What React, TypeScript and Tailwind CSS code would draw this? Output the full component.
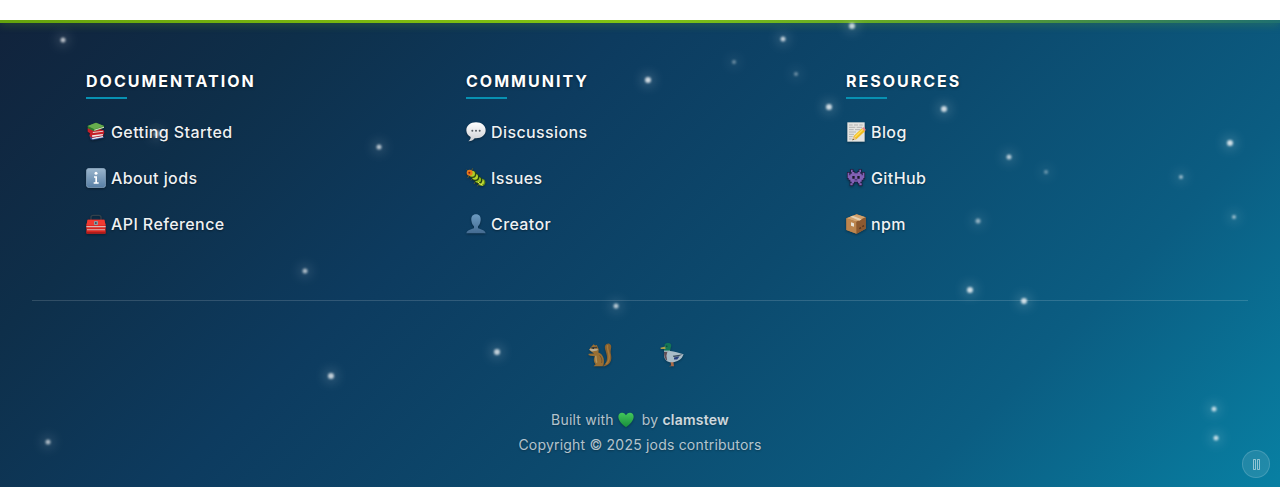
import type { ReactNode } from "react";

type Star = { x: number; y: number; size: number; opacity: number };

const STARS: Star[] = [
  { x: 63, y: 20, size: 5, opacity: 0.7 },
  { x: 852, y: 6, size: 6, opacity: 0.75 },
  { x: 783, y: 19, size: 5, opacity: 0.75 },
  { x: 734, y: 42, size: 4, opacity: 0.4 },
  { x: 796, y: 54, size: 4, opacity: 0.4 },
  { x: 648, y: 60, size: 6, opacity: 0.8 },
  { x: 829, y: 87, size: 6, opacity: 0.8 },
  { x: 944, y: 89, size: 6, opacity: 0.8 },
  { x: 1009, y: 137, size: 5, opacity: 0.7 },
  { x: 1046, y: 152, size: 4, opacity: 0.4 },
  { x: 1181, y: 157, size: 4, opacity: 0.6 },
  { x: 1230, y: 123, size: 6, opacity: 0.8 },
  { x: 1234, y: 197, size: 4, opacity: 0.6 },
  { x: 978, y: 201, size: 5, opacity: 0.55 },
  { x: 970, y: 270, size: 6, opacity: 0.8 },
  { x: 1024, y: 281, size: 6, opacity: 0.8 },
  { x: 379, y: 127, size: 5, opacity: 0.7 },
  { x: 157, y: 114, size: 7, opacity: 0.45 },
  { x: 305, y: 251, size: 5, opacity: 0.65 },
  { x: 616, y: 286, size: 5, opacity: 0.7 },
  { x: 497, y: 332, size: 6, opacity: 0.75 },
  { x: 331, y: 356, size: 6, opacity: 0.75 },
  { x: 48, y: 422, size: 5, opacity: 0.65 },
  { x: 1214, y: 389, size: 5, opacity: 0.75 },
  { x: 1216, y: 418, size: 5, opacity: 0.75 },
];

function Emoji({ children, className = "h-5 w-5" }: { children: ReactNode; className?: string }) {
  return (
    <svg viewBox="0 0 60 60" aria-hidden="true" className={`shrink-0 drop-shadow-[0_1px_1px_rgba(0,0,0,0.35)] ${className}`}>
      {children}
    </svg>
  );
}

const Books = () => (
  <Emoji>
    <path d="M11 43 48 38 54 47 20 55 13 52Z" fill="#30498f" />
    <path d="M17 48 50 41 52 46 20 52Z" fill="#e9e9ee" />
    <path d="M5 18 10 13 53 25 55 31 51 42 17 47 10 42 12 34 5 29Z" fill="#c51f28" />
    <path d="M18 40 51 36 50 40 19 45Z" fill="#f0e5e5" />
    <path d="M20 30 52 26 51 29 21 33Z" fill="#e7cfcf" />
    <path d="M5 12 30 2 54 12 54 17 24 27 6 19Z" fill="#408b33" />
    <path d="M5 12 30 2 54 12 25 22Z" fill="#67ad4d" />
    <path d="M25 23 54 14V17L25 26Z" fill="#d5dfc8" />
    <path d="M5 13 24 22V27L6 19Z" fill="#2d7a2e" />
  </Emoji>
);

const Info = () => (
  <Emoji>
    <defs>
      <linearGradient id="infoFill" x2="0" y2="1">
        <stop stopColor="#9bb6cd" />
        <stop offset="1" stopColor="#587fa5" />
      </linearGradient>
    </defs>
    <rect x="1" y="1" width="58" height="58" rx="9" fill="url(#infoFill)" stroke="#8fabc3" strokeWidth="2" />
    <circle cx="30" cy="16" r="4.5" fill="#fff" />
    <path d="M24 25H33V43H38V47H23V43H28V29H24Z" fill="#fff" />
  </Emoji>
);

const Toolbox = () => (
  <Emoji>
    <path d="M15 18V10Q15 4 22 4H38Q45 4 45 10V18" fill="none" stroke="#33414b" strokeWidth="4" />
    <path d="M5 17H55L59 35V57Q59 59 57 59H3Q1 59 1 57V35Z" fill="#d92620" />
    <path d="M5 17H55L59 34H1Z" fill="#f03a31" />
    <path d="M1 36H59V40H1ZM3 46H57V49H3Z" fill="#dcb5b1" />
    <rect x="24" y="21" width="12" height="12" rx="2" fill="#8f9ba4" />
    <path d="M27 24H32V30H27Z" fill="#455662" />
    <path d="M1 55H59V58H1Z" fill="#9e1919" />
  </Emoji>
);

const Speech = () => (
  <Emoji>
    <defs>
      <linearGradient id="bubbleFill" x2="0" y2="1">
        <stop stopColor="#fff" />
        <stop offset="1" stopColor="#cdcfd3" />
      </linearGradient>
    </defs>
    <path d="M30 1C13 1 1 11 1 25c0 9 5 16 13 20 0 6-3 10-7 13 9 0 15-4 19-9h4c17 0 29-10 29-24S47 1 30 1Z" fill="url(#bubbleFill)" />
    <circle cx="19" cy="26" r="3" fill="#555b62" />
    <circle cx="30" cy="26" r="3" fill="#555b62" />
    <circle cx="41" cy="26" r="3" fill="#555b62" />
  </Emoji>
);

const Caterpillar = () => (
  <Emoji>
    <path d="M7 10 2 5M17 7 20 1M8 24 5 30M19 32 15 37M28 41 24 48M38 49 34 55" stroke="#5d5a29" strokeWidth="3" />
    <circle cx="47" cy="43" r="11" fill="#658d14" />
    <circle cx="46" cy="42" r="8" fill="#b9d532" />
    <circle cx="38" cy="37" r="11" fill="#25410e" />
    <circle cx="36" cy="35" r="9" fill="#98bf24" />
    <circle cx="29" cy="28" r="11" fill="#254112" />
    <circle cx="27" cy="26" r="9" fill="#b7d52c" />
    <circle cx="20" cy="19" r="11" fill="#304b13" />
    <circle cx="18" cy="17" r="9" fill="#b0cf27" />
    <circle cx="11" cy="14" r="9" fill="#e9791c" />
    <circle cx="10" cy="14" r="3" fill="#851f13" />
    <path d="M36 42 43 50M44 47 49 53" stroke="#edf05b" strokeWidth="3" />
  </Emoji>
);

const Silhouette = () => (
  <Emoji>
    <defs>
      <linearGradient id="personFill" x2="0" y2="1">
        <stop stopColor="#6b9ac1" />
        <stop offset="1" stopColor="#446b91" />
      </linearGradient>
    </defs>
    <path d="M30 1C20 1 15 8 16 19c1 9 4 15 8 18v5C20 46 3 46 1 58H59C57 46 40 46 36 42v-5c4-3 7-9 8-18C45 8 40 1 30 1Z" fill="url(#personFill)" />
  </Emoji>
);

const Memo = () => (
  <Emoji>
    <rect x="4" y="1" width="52" height="58" fill="#e4e4e1" />
    <path d="M9 9H20M24 9H36M40 9H50M9 16H28M32 16H48M9 23H23M27 23H43M9 30H30M9 37H24M9 44H20M9 51H17" stroke="#a9aaa8" strokeWidth="2.5" />
    <path d="M19 55 23 42 48 19 57 28 31 52Z" fill="#f1bd22" />
    <path d="M27 45 51 22" stroke="#ffdf5d" strokeWidth="4" />
    <path d="M48 19 52 16Q56 16 59 23L57 28Z" fill="#e9858b" />
    <path d="M19 55 23 42 31 52Z" fill="#e7c295" />
    <path d="M19 55 21 50 24 53Z" fill="#333" />
  </Emoji>
);

const Invader = () => (
  <Emoji>
    <path
      d="M15 5H20V12H25V16H35V12H40V5H45V12H43V17H47V22H50V14H55V30H52V35H47V41H43V46H47V52H40V46H36V41H24V46H20V52H13V46H17V41H13V35H8V30H5V14H10V22H13V17H17V12H15Z"
      fill="#8161b5"
      stroke="#211b3c"
      strokeWidth="4"
      paintOrder="stroke"
    />
    <path d="M19 24H26V32H19ZM34 24H41V32H34Z" fill="#191828" />
    <path d="M26 34H34V37H26Z" fill="#3a2b60" />
  </Emoji>
);

const Package = () => (
  <Emoji>
    <path d="M1 13 32 1 59 10 59 44 32 59 1 48Z" fill="#a5713f" />
    <path d="M1 13 32 1 59 10 31 23Z" fill="#d0a16d" />
    <path d="M1 13 31 23V59L1 48Z" fill="#bc854e" />
    <path d="M31 23 59 10V44L32 59Z" fill="#8c5930" />
    <path d="M13 8 20 5 47 16 40 20Z" fill="#e5d0b0" />
    <path d="M15 25 24 28V38L15 35Z" fill="#e8e2d6" />
    <path d="M40 44 45 41M49 38 54 35" stroke="#51351f" strokeWidth="4" />
  </Emoji>
);

const Chipmunk = () => (
  <Emoji className="h-6 w-6">
    <path d="M36 58C46 52 49 42 47 31 45 20 40 13 43 6 46 0 54-1 57 5 60 12 55 17 57 27 61 42 56 54 42 58Z" fill="#a96820" />
    <path d="M49 5C46 14 53 22 53 34 53 43 50 49 45 53" fill="none" stroke="#cc8730" strokeWidth="4" />
    <path d="M6 12 14 3 18 6 22 5 27 16 26 24C38 28 42 41 39 54L36 58H14L19 53C13 46 14 39 17 33L6 32 1 30 2 27 15 26 8 21 3 17Z" fill="#bd7926" />
    <path d="M3 17 7 14 25 15 23 19 10 21Z" fill="#e0c49c" />
    <path d="M8 12 23 11" stroke="#4f3d29" strokeWidth="3" />
    <path d="M19 32C21 37 19 44 22 49" fill="none" stroke="#dba95d" strokeWidth="4" />
    <path d="M29 31C34 36 36 43 34 50" fill="none" stroke="#7f501f" strokeWidth="2" />
    <circle cx="13" cy="13" r="2" fill="#171c1d" />
  </Emoji>
);

const Duck = () => (
  <Emoji className="h-6 w-6">
    <path d="M26 45 28 56 22 58H35L33 44Z" fill="#d4713d" />
    <path d="M13 23 26 20C36 20 47 26 59 28L55 36C47 47 24 53 15 43 9 36 9 29 13 23Z" fill="#d2d9df" />
    <path d="M11 21 19 20 16 32 18 44C12 40 9 30 11 21Z" fill="#79504f" />
    <path d="M32 32 58 28 45 34 34 35Z" fill="#434c56" />
    <path d="M35 36 49 33 43 41 35 41Z" fill="#303c82" />
    <path d="M10 20V14L13 10C9 4 13 0 20 0 27 0 30 5 27 11L25 20Z" fill="#168251" />
    <path d="M10 19H25V22H10Z" fill="#dce4e4" />
    <path d="M13 9 1 12 2 15 14 15Z" fill="#d4b440" />
    <circle cx="17" cy="8" r="1.5" fill="#102624" />
  </Emoji>
);

const Heart = () => (
  <svg viewBox="0 0 48 48" role="img" aria-label="love" className="h-4 w-4 shrink-0 drop-shadow-[0_1px_1px_rgba(0,0,0,0.3)]">
    <defs>
      <linearGradient id="heartFill" x2="0" y2="1">
        <stop stopColor="#43c85b" />
        <stop offset="1" stopColor="#188d3c" />
      </linearGradient>
    </defs>
    <path d="M24 46C14 38 1 27 1 14 1 6 6 2 12 2c6 0 10 4 12 8 2-4 6-8 12-8 6 0 11 4 11 12 0 13-13 24-23 32Z" fill="url(#heartFill)" />
  </svg>
);

const COLUMNS = [
  {
    title: "Documentation",
    links: [
      { label: "Getting Started", Icon: Books },
      { label: "About jods", Icon: Info },
      { label: "API Reference", Icon: Toolbox },
    ],
  },
  {
    title: "Community",
    links: [
      { label: "Discussions", Icon: Speech },
      { label: "Issues", Icon: Caterpillar },
      { label: "Creator", Icon: Silhouette },
    ],
  },
  {
    title: "Resources",
    links: [
      { label: "Blog", Icon: Memo },
      { label: "GitHub", Icon: Invader },
      { label: "npm", Icon: Package },
    ],
  },
];

export default function App() {
  return (
    <div className="bg-white pt-5 font-['Inter',sans-serif]">
      <footer className="relative overflow-hidden bg-[linear-gradient(135deg,#11233c_0%,#0e2f4a_18%,#0d3b5f_36%,#0c4a6e_58%,#0b5d82_79%,#0880a3_100%)] px-8 pb-[30px] text-white">
        <div className="absolute inset-x-0 top-0 h-[3px] bg-[linear-gradient(90deg,#65a30d_0%,#7cb90f_30%,#80c414_50%,#5ba02d_75%,#1f7070_100%)] shadow-[0_0_10px_rgba(132,204,22,0.5)]" />
        <div aria-hidden="true">
          {STARS.map((s) => (
            <span
              key={`${s.x}-${s.y}`}
              className="absolute -translate-x-1/2 -translate-y-1/2 rounded-full bg-white shadow-[0_0_12px_3px_rgba(255,255,255,0.3)] blur-[1px]"
              style={{ left: `${(s.x / 1280) * 100}%`, top: s.y, width: s.size, height: s.size, opacity: s.opacity }}
            />
          ))}
        </div>

        <nav aria-label="Footer" className="relative mx-auto grid max-w-[1140px] grid-cols-3 pt-[47px]">
          {COLUMNS.map(({ title, links }) => (
            <section key={title} className="px-4">
              <h2 className="text-base leading-7 font-bold tracking-[2px] uppercase [text-shadow:0_1px_3px_rgba(0,0,0,0.5)]">{title}</h2>
              <div className="mt-[2px] h-[2px] w-[41px] bg-[#0891b2]" />
              <ul className="mt-[18px] flex flex-col gap-4">
                {links.map(({ label, Icon }) => (
                  <li key={label}>
                    <a href="#" className="flex h-[30px] w-fit items-center gap-[5px] text-base font-medium tracking-[0.4px] text-white/95 [text-shadow:0_1px_2px_rgba(0,0,0,0.4)]">
                      <Icon />
                      {label}
                    </a>
                  </li>
                ))}
              </ul>
            </section>
          ))}
        </nav>

        <div className="relative mt-[61px] border-t border-white/15 pt-[42px]">
          <div className="flex justify-center gap-12 pr-2 opacity-80">
            <Chipmunk />
            <Duck />
          </div>
          <div className="mt-10 text-center text-sm leading-[25px] tracking-[0.2px] text-white/70 [text-shadow:0_1px_2px_rgba(0,0,0,0.3)]">
            <p className="flex items-center justify-center gap-1">
              <span>Built with</span>
              <Heart />
              <span className="ml-1">
                by{" "}
                <a href="#" className="font-semibold text-white/80">
                  clamstew
                </a>
              </span>
            </p>
            <p>Copyright © 2025 jods contributors</p>
          </div>
        </div>

        <button
          type="button"
          aria-label="Pause animation"
          className="absolute right-[10px] bottom-[9px] flex h-7 w-7 items-center justify-center rounded-full border border-white/15 bg-white/10"
        >
          <svg viewBox="0 0 9 11" className="h-[11px] w-[9px]" fill="none" stroke="white" strokeOpacity="0.5" aria-hidden="true">
            <path d="M1.5.5H3.5V10.5H1.5ZM5.5.5H7.5V10.5H5.5Z" />
          </svg>
        </button>
      </footer>
    </div>
  );
}
